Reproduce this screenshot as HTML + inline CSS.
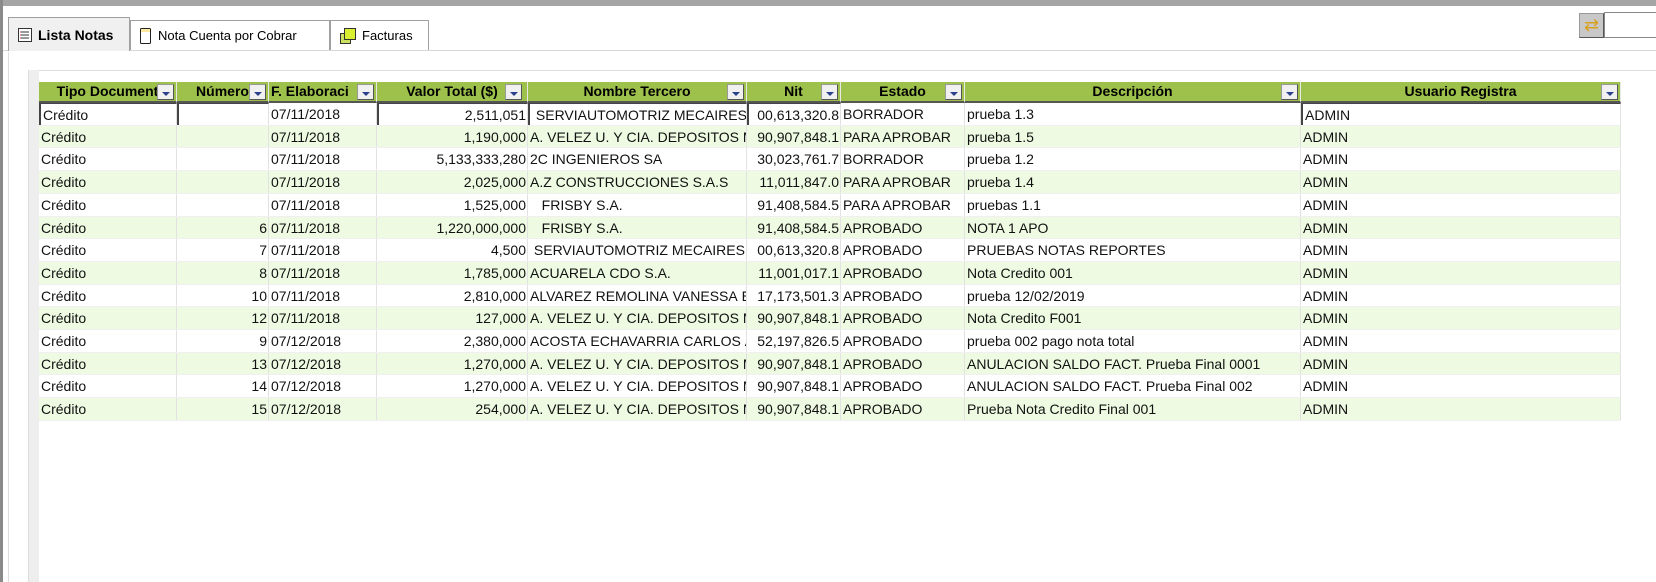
<!DOCTYPE html>
<html><head><meta charset="utf-8"><style>
*{box-sizing:border-box;margin:0;padding:0}
body{width:1656px;height:582px;background:#fff;position:relative;overflow:hidden;font-family:"Liberation Sans",sans-serif;}
.abs{position:absolute}
.tab{position:absolute;border:1px solid #a0a0a0;border-bottom:none;background:#f0f0f0;font-size:13px;color:#000;display:flex;align-items:center;padding-left:8px;gap:5px}
.hdr{position:absolute;top:82px;height:21px;background:#9dc14b;border-right:1px solid #e8e8e8;border-bottom:2px solid #555;font-weight:bold;font-size:14px;text-align:center;line-height:18px;color:#000;overflow:hidden;white-space:nowrap}
.btn{position:absolute;right:2px;top:2px;width:17px;height:16px;background:#f0f0f0;border:1px solid #999;border-right-color:#555;border-bottom-color:#555}
.btn:after{content:"";position:absolute;left:4px;top:7px;border-left:4px solid transparent;border-right:4px solid transparent;border-top:4px solid #2b3f8c}
.row{position:absolute;left:39px;width:1582px;height:22.8px}
.c{position:absolute;top:0;height:100%;font-size:14px;line-height:22px;white-space:nowrap;overflow:hidden;border-right:1px solid #e2e2e2;color:#111;padding-left:2px}
.r{text-align:right;padding-right:1px}
</style></head><body>
<div class="abs" style="left:0;top:0;width:1656px;height:6px;background:#a5a5a5"></div>
<div class="abs" style="left:0;top:0;width:3px;height:582px;background:#8a8a8a"></div>
<div class="abs" style="left:8px;top:52px;width:1px;height:530px;background:#ddd"></div>
<div class="abs" style="left:3px;top:50px;width:1653px;height:1px;background:#d8d8d8"></div>
<div class="abs" style="left:28px;top:70px;width:1628px;height:1px;background:#ddd"></div>
<div class="abs" style="left:28px;top:70px;width:11px;height:512px;background:#eee;border-left:1px solid #ddd"></div>
<div class="tab" style="left:8px;top:17px;width:122px;height:34px;background:#f0f0f0;font-weight:bold;font-size:14px;z-index:2">
<svg width="16" height="16"><rect x="1.5" y="1.5" width="13" height="13" fill="#fff" stroke="#333"/><path d="M4 5h8M4 8h8M4 11h8" stroke="#333"/><path d="M3 5h1M3 8h1M3 11h1" stroke="#d33"/></svg>Lista Notas</div>
<div class="tab" style="left:130px;top:20px;width:200px;height:30px;background:#fff">
<svg width="14" height="18"><rect x="1.5" y="1.5" width="10" height="15" rx="1" fill="#fff" stroke="#222"/><rect x="2" y="2" width="9" height="3" fill="#ffe9a0"/></svg>Nota Cuenta por Cobrar</div>
<div class="tab" style="left:330px;top:20px;width:99px;height:30px;background:#fff">
<svg width="18" height="18"><rect x="1.5" y="6.5" width="10" height="10" fill="#cde060" stroke="#333"/><rect x="5.5" y="1.5" width="11" height="11" fill="#d8f030" stroke="#333"/></svg>Facturas</div>
<div class="abs" style="left:1579px;top:13px;width:25px;height:25px;background:#c8c8c8;border:1px solid #999;border-right-color:#555;border-bottom-color:#555;color:#d9a020;font-size:18px;text-align:center;line-height:22px">⇄</div>
<div class="abs" style="left:1604px;top:12px;width:60px;height:26px;border:1px solid #888;background:#fff"></div>

<div class="hdr" style="left:39px;width:138px">Tipo Document<div class="btn"></div></div>
<div class="hdr" style="left:177px;width:92px">Número<div class="btn"></div></div>
<div class="hdr" style="left:269px;width:108px;text-align:left;padding-left:2px">F. Elaboraci<div class="btn"></div></div>
<div class="hdr" style="left:377px;width:151px">Valor Total ($)<div class="btn" style="right:auto;left:128px"></div></div>
<div class="hdr" style="left:528px;width:219px">Nombre Tercero<div class="btn"></div></div>
<div class="hdr" style="left:747px;width:94px">Nit<div class="btn"></div></div>
<div class="hdr" style="left:841px;width:124px">Estado<div class="btn"></div></div>
<div class="hdr" style="left:965px;width:336px">Descripción<div class="btn"></div></div>
<div class="hdr" style="left:1301px;width:320px">Usuario Registra<div class="btn"></div></div>

<div id="rows"></div>
<script>
var d=[
["","07/11/2018","2,511,051"," SERVIAUTOMOTRIZ MECAIRES J","00,613,320.8","BORRADOR","prueba 1.3"],
["","07/11/2018","1,190,000","A. VELEZ U. Y CIA. DEPOSITOS MI","90,907,848.1","PARA APROBAR","prueba 1.5"],
["","07/11/2018","5,133,333,280","2C INGENIEROS SA","30,023,761.7","BORRADOR","prueba 1.2"],
["","07/11/2018","2,025,000","A.Z CONSTRUCCIONES S.A.S","11,011,847.0","PARA APROBAR","prueba 1.4"],
["","07/11/2018","1,525,000","   FRISBY S.A.","91,408,584.5","PARA APROBAR","pruebas 1.1"],
["6","07/11/2018","1,220,000,000","   FRISBY S.A.","91,408,584.5","APROBADO","NOTA 1 APO"],
["7","07/11/2018","4,500"," SERVIAUTOMOTRIZ MECAIRES J","00,613,320.8","APROBADO","PRUEBAS NOTAS REPORTES"],
["8","07/11/2018","1,785,000","ACUARELA CDO S.A.","11,001,017.1","APROBADO","Nota Credito 001"],
["10","07/11/2018","2,810,000","ALVAREZ REMOLINA VANESSA EST","17,173,501.3","APROBADO","prueba 12/02/2019"],
["12","07/11/2018","127,000","A. VELEZ U. Y CIA. DEPOSITOS MI","90,907,848.1","APROBADO","Nota Credito F001"],
["9","07/12/2018","2,380,000","ACOSTA ECHAVARRIA CARLOS ANI","52,197,826.5","APROBADO","prueba 002 pago nota total"],
["13","07/12/2018","1,270,000","A. VELEZ U. Y CIA. DEPOSITOS MI","90,907,848.1","APROBADO","ANULACION SALDO FACT. Prueba Final 0001"],
["14","07/12/2018","1,270,000","A. VELEZ U. Y CIA. DEPOSITOS MI","90,907,848.1","APROBADO","ANULACION SALDO FACT. Prueba Final 002"],
["15","07/12/2018","254,000","A. VELEZ U. Y CIA. DEPOSITOS MI","90,907,848.1","APROBADO","Prueba Nota Credito Final 001"]];
var cols=[[0,138],[138,92],[230,108],[338,151],[489,219],[708,94],[802,124],[926,336],[1262,320]];
var h="";
d.forEach(function(r,i){
var v=["Crédito",r[0],r[1],r[2],r[3].replace(/ /g,"&nbsp;"),r[4],r[5],r[6],"ADMIN"];
var bg=i%2?"#eefbe2":"#fff";
h+='<div class="row" style="top:'+(103+i*22.7)+'px;background:'+bg+';border-bottom:1px solid #f0f0f0">';
v.forEach(function(t,j){var cls=(j==1||j==3||j==5)?"c r":"c";
var ex=(i==0&&j!=2&&j!=6&&j!=7)?"border-left:2px solid #444;border-top:1px solid #444;":"";
h+='<div class="'+cls+'" style="left:'+cols[j][0]+'px;width:'+cols[j][1]+'px;'+ex+'">'+t+'</div>';});
h+='</div>';});
document.getElementById("rows").innerHTML=h;
</script>
</body></html>
